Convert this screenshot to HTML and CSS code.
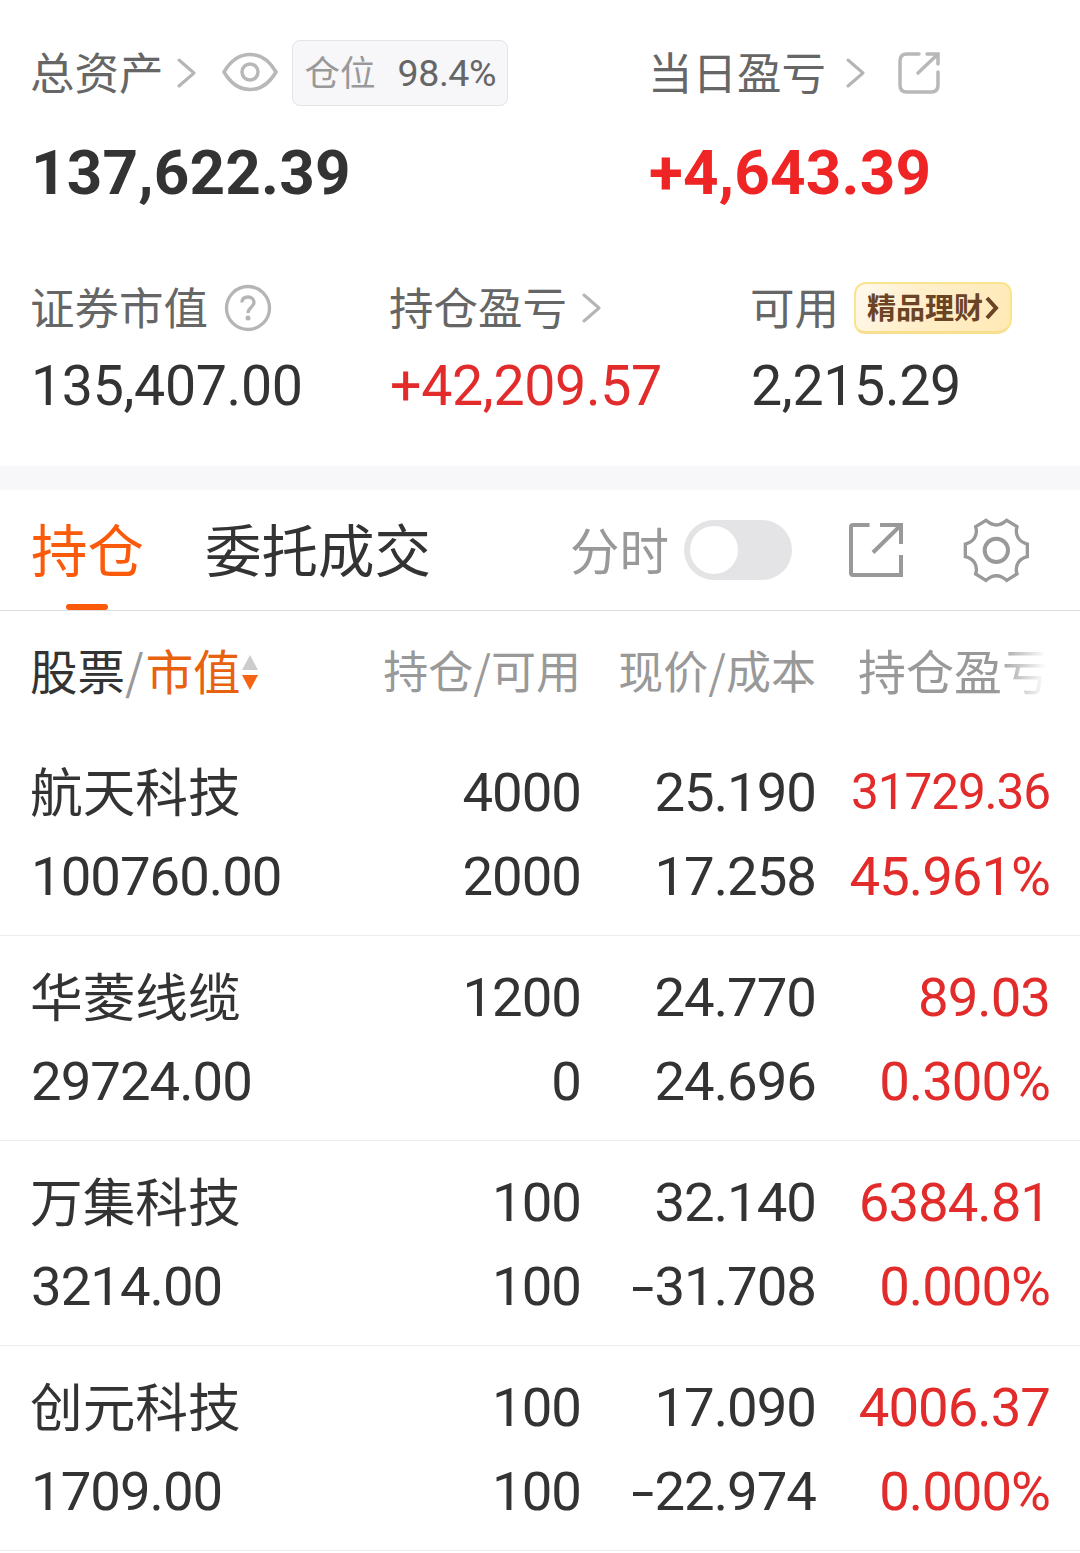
FILE: index.html
```html
<!DOCTYPE html>
<html lang="zh-CN">
<head>
<meta charset="utf-8">
<title>持仓</title>
<link rel="stylesheet" href="styles.css">
</head>
<body>
<svg class="defs" width="0" height="0" aria-hidden="true">
  <symbol id="chevron" viewBox="0 0 20 32"><path d="M3 3 18 16 3 29" fill="none" stroke="#b5b5b5" stroke-width="3" stroke-linecap="round" stroke-linejoin="round"/></symbol>
</svg>
<section class="summary">
  <div class="totals">
    <div>
      <div class="label"><span class="text">总资产</span><svg class="chev c1"><use href="#chevron"/></svg>
        <svg class="eye" viewBox="0 0 56 40"><path d="M2 20C9 8 18 2.500 28 2.500S47 8 54 20C47 32 38 37.500 28 37.500S9 32 2 20Z"/><circle cx="28" cy="20" r="8"/></svg>
        <span class="chip"><span class="text">仓位</span><b class="num">98.4%</b></span>
      </div>
      <div class="total num">137,622.39</div>
    </div>
    <div>
      <div class="label"><span class="text">当日盈亏</span><svg class="chev c2"><use href="#chevron"/></svg>
        <svg class="share" viewBox="0 0 44 44"><path d="M22 3H10Q3 3 3 10V34Q3 41 10 41H34Q41 41 41 34V21M30 3H41V13M41 3 21 22"/></svg>
      </div>
      <div class="total num red-bold">+4,643.39</div>
    </div>
  </div>
  <div class="details">
    <div>
      <div class="label"><span class="text">证券市值</span><svg class="help" viewBox="0 0 48 48"><circle cx="24" cy="24" r="21.500"/><path d="M17.800 18.500C18 14.800 20.500 13 24 13C27.800 13 30 15.500 30 18.500C30 23 24 23.500 24 29"/><circle class="dot" cx="24" cy="34" r="2.500"/></svg></div>
      <div class="value num">135,407.00</div>
    </div>
    <div>
      <div class="label"><span class="text">持仓盈亏</span><svg class="chev c3"><use href="#chevron"/></svg></div>
      <div class="value num red">+42,209.57</div>
    </div>
    <div>
      <div class="label"><span class="text">可用</span><span class="badge"><span class="text">精品理财</span><svg viewBox="0 0 14 24"><path d="M2 2 11 12 2 22"/></svg></span></div>
      <div class="value num">2,215.29</div>
    </div>
  </div>
</section>
<nav class="tabs">
  <span class="tab active">持仓</span>
  <span class="tab">委托成交</span>
  <span class="minute">分时</span>
  <span class="toggle"></span>
  <svg class="export" viewBox="0 0 56 56"><path d="M21.500 3H5Q3 3 3 5V51Q3 53 5 53H53V33M32 3H53V22M53 3 25 30.500"/></svg>
  <svg class="gear" viewBox="398 51 200 200"><path d="M467 61Q498 89 529 61L560 80C552 106 567 127 591 132V170C567 175 552 196 560 222L529 241Q498 213 467 241L436 222C444 196 429 175 405 170V132C429 127 444 106 436 80Z"/><circle cx="498" cy="151" r="35"/></svg>
</nav>
<section class="holdings">
  <div class="cols">
    <span class="h-stock">股票<i>/</i><em>市值</em><svg viewBox="0 0 16 36"><path d="M8 0 16 15H0Z" fill="#ccc"/><path d="M0 20H16L8 35Z" fill="#f66414"/></svg></span>
    <span class="h-mid">持仓<i>/</i>可用</span>
    <span class="h-mid">现价<i>/</i>成本</span>
    <span class="h-pl">持仓盈亏</span>
  </div>
  <div class="row">
    <span class="name">航天科技</span><span class="num">4000</span><span class="num">25.190</span><span class="num red small">31729.36</span>
    <span class="num">100760.00</span><span class="num">2000</span><span class="num">17.258</span><span class="num red">45.961%</span>
  </div>
  <div class="row">
    <span class="name">华菱线缆</span><span class="num">1200</span><span class="num">24.770</span><span class="num red">89.03</span>
    <span class="num">29724.00</span><span class="num">0</span><span class="num">24.696</span><span class="num red">0.300%</span>
  </div>
  <div class="row">
    <span class="name">万集科技</span><span class="num">100</span><span class="num">32.140</span><span class="num red">6384.81</span>
    <span class="num">3214.00</span><span class="num">100</span><span class="num"><i class="minus">-</i>31.708</span><span class="num red">0.000%</span>
  </div>
  <div class="row">
    <span class="name">创元科技</span><span class="num">100</span><span class="num">17.090</span><span class="num red">4006.37</span>
    <span class="num">1709.00</span><span class="num">100</span><span class="num"><i class="minus">-</i>22.974</span><span class="num red">0.000%</span>
  </div>
</section>
</body>
</html>
```
FILE: styles.css
```css
* { box-sizing: border-box; }
body {
  margin: 0;
  width: 1080px;
  height: 1553px;
  overflow: hidden;
  background: #fff;
  color: #333;
  font-family: "Noto Sans CJK SC", sans-serif;
}
svg { flex: none; fill: none; }
i, em { font-style: normal; }
.defs { position: absolute; }
.num { font-family: Roboto, sans-serif; white-space: nowrap; }
.red { color: #e22b2b; }

.summary { height: 466px; padding: 36px 0 0 31px; }
.totals { display: grid; grid-template-columns: 618px 1fr; height: 236px; }
.details { display: grid; grid-template-columns: 359px 361px 1fr; }
.label {
  display: flex;
  align-items: center;
  height: 72px;
  font-size: 44.500px;
  line-height: 72px;
  color: #666;
  white-space: nowrap;
}
.text { padding-bottom: 5px; }
.totals .label { height: 74px; }
.label > .text { margin-left: -1px; }
.total {
  margin-top: 27px;
  font-size: 62px;
  font-weight: 700;
  line-height: 72px;
  letter-spacing: 0.200px;
}
.red-bold { color: #ef2525; }
.value { margin-top: 7px; font-size: 55.500px; line-height: 72px; letter-spacing: -0.350px; }
.chev { width: 20px; height: 32px; }
.c1 { margin-left: 12px; }
.c2 { margin-left: 19px; }
.c3 { margin-left: 14px; }
.eye { width: 56px; height: 40px; margin-left: 26px; margin-top: -3px; stroke: #b8b8b8; stroke-width: 3.500; }
.chip {
  display: flex;
  align-items: center;
  width: 216px;
  height: 66px;
  margin-left: 14px;
  padding-left: 12px;
  border: 1px solid #e4e4e6;
  border-radius: 8px;
  background: #f7f7fa;
  color: #999;
  font-size: 35.500px;
}
.chip .num { margin-left: 22px; font-size: 37.500px; font-weight: 400; letter-spacing: -0.400px; color: #666; }
.share { width: 44px; height: 44px; margin-left: 32px; stroke: #b8b8b8; stroke-width: 3.500; stroke-linecap: round; }
.help { width: 48px; height: 48px; margin-left: 16px; stroke: #b5b5b5; stroke-width: 3.300; }
.help .dot { fill: #b5b5b5; stroke: none; }
.badge {
  display: flex;
  align-items: center;
  width: 158px;
  height: 52px;
  margin-left: 15px;
  padding-left: 11px;
  border: 2px solid #fbe58c;
  border-bottom: 3px solid #f8df8e;
  border-radius: 12px 11px 15px 11px;
  background: linear-gradient(115deg, #fffaf0 0, #ffefcc 35%, #ffe9b5 100%);
  color: #6b4426;
  font-size: 29px;
  font-weight: 700;
}
.badge .text { padding-bottom: 3px; }
.badge svg { width: 14px; height: 24px; margin-left: 2px; stroke: #6b4426; stroke-width: 4; }

.tabs {
  display: flex;
  align-items: center;
  height: 145px;
  padding-left: 31px;
  border-top: 24px solid #f7f7fa;
  border-bottom: 1px solid #dedede;
}
.tab { position: relative; height: 120px; margin-right: 61px; font-size: 56.500px; line-height: 115px; }
.active { color: #fa5a0a; }
.active::after {
  content: "";
  position: absolute;
  left: 35px;
  bottom: 0;
  width: 42px;
  height: 6px;
  border-radius: 3px;
  background: #fa5a0a;
}
.minute { width: 99px; margin-left: 78px; padding-bottom: 4px; font-size: 49.500px; color: #999; }
.toggle {
  width: 108px;
  height: 60px;
  margin-left: 15px;
  padding: 6px;
  border-radius: 30px;
  background: #e4e4e6;
}
.toggle::before { content: ""; display: block; width: 48px; height: 48px; border-radius: 50%; background: #fff; }
.export { width: 56px; height: 56px; margin-left: 56px; stroke: #999; stroke-width: 4; }
.gear { width: 66.700px; height: 66.700px; margin-left: 58.500px; stroke: #999; stroke-width: 10; }
.gear circle { stroke-width: 12; }

.cols, .row { display: grid; grid-template-columns: 250px 300px 235px 233px; padding-left: 31px; }
.cols { height: 120px; line-height: 122px; color: #999; font-size: 45px; white-space: nowrap; }
.cols span { display: flex; align-items: center; justify-content: flex-end; height: 118px; }
.cols .h-stock { justify-content: flex-start; height: 117px; margin-left: -1px; font-size: 47.500px; color: #333; }
.h-stock i { margin-right: 2px; color: #999; }
.h-stock em { color: #e8610f; }
.h-stock svg { width: 16px; height: 36px; margin: 6px 0 0 1px; }
.cols .h-pl {
  justify-content: flex-start;
  height: 115px;
  padding-left: 42px;
  font-size: 48px;
  -webkit-mask-image: linear-gradient(90deg, #000 180px, transparent 230px);
  mask-image: linear-gradient(90deg, #000 180px, transparent 230px);
}
.row {
  height: 205px;
  padding-top: 20px;
  grid-auto-rows: 84px;
  border-bottom: 1px solid #ececec;
  line-height: 82px;
  text-align: right;
  font-size: 54.500px;
}
.row > :nth-child(4n + 1) { text-align: left; }
.row .num { letter-spacing: -1px; }
.row .num:nth-child(4n) { margin-right: -1px; }
.row .name { margin-left: -1px; font-size: 52.700px; line-height: 76px; }
.row .small { font-size: 49.500px; letter-spacing: -1.100px; }
.minus { display: inline-block; margin-right: 5px; transform: scaleX(1.500); }
```
